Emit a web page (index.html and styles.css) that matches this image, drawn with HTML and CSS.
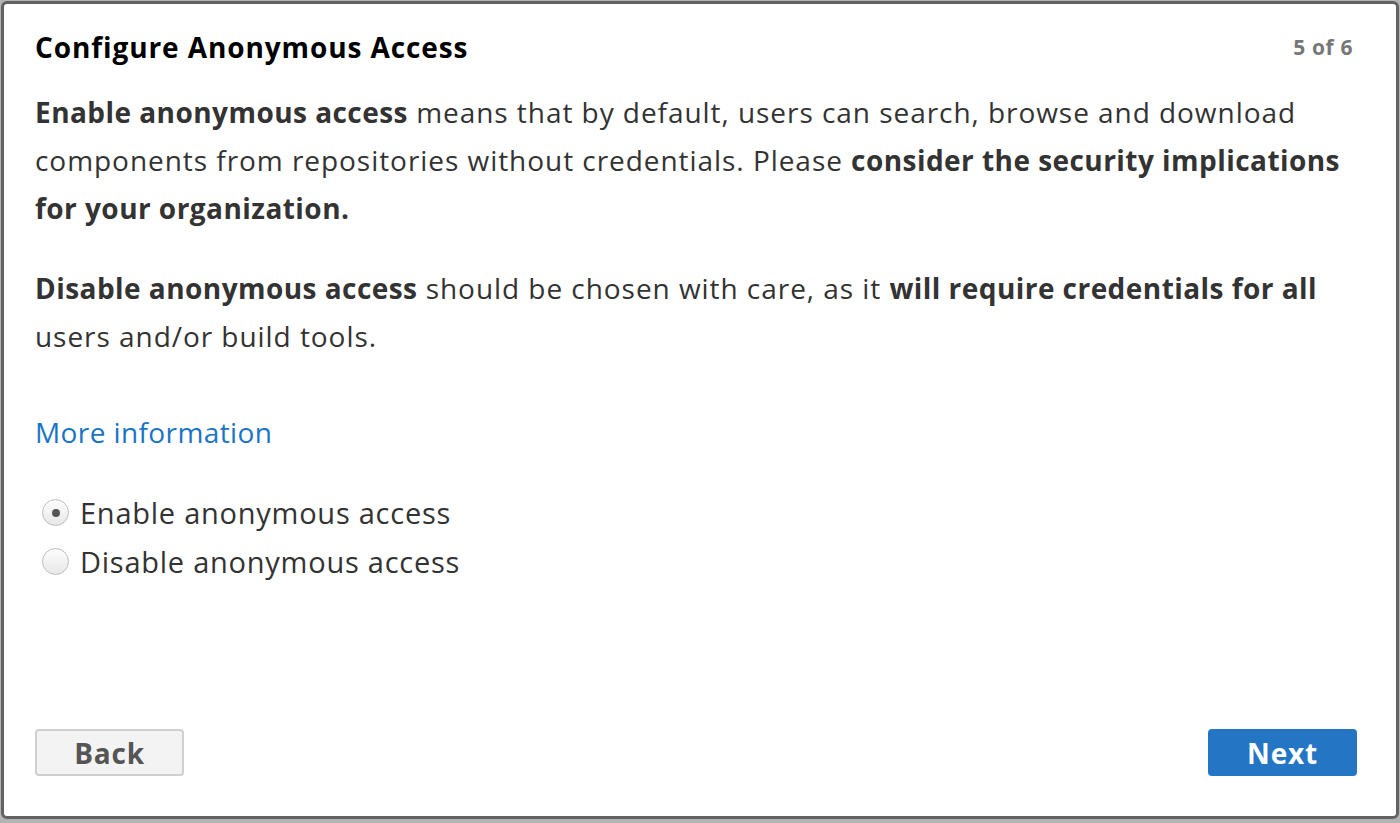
FILE: index.html
```html
<!DOCTYPE html>
<html>
<head>
<meta charset="utf-8">
<link rel="stylesheet" href="styles.css">
</head>
<body>
<div class="dialog">
  <div class="header">
    <h1 class="title">Configure Anonymous Access</h1>
    <span class="step">5 of 6</span>
  </div>
  <div class="body">
    <p class="para"><b>Enable anonymous access</b> means that by default, users can search, browse and download components from repositories without credentials. Please <b>consider the security implications for your organization.</b></p>
    <p class="para"><b>Disable anonymous access</b> should be chosen with care, as it <b>will require credentials for all</b> users and/or build tools.</p>
    <a class="link" href="#">More information</a>
    <div class="options">
      <label class="option"><span class="radio checked"></span>Enable anonymous access</label>
      <label class="option"><span class="radio"></span>Disable anonymous access</label>
    </div>
  </div>
  <div class="footer">
    <button class="btn back">Back</button>
    <button class="btn next">Next</button>
  </div>
</div>
</body>
</html>
```
FILE: styles.css
```css
html, body {
  margin: 0;
  padding: 0;
}
body {
  background: #b4b4b4;
  width: 1400px;
  height: 823px;
  padding: 1px 0 0 1px;
  box-sizing: border-box;
  font-family: "Open Sans", "Liberation Sans", sans-serif;
  color: #333;
}
.dialog {
  width: 1398px;
  height: 818px;
  box-sizing: border-box;
  border: 3px solid #626262;
  border-radius: 6px;
  background: #fff;
  display: flex;
  flex-direction: column;
  padding: 0 39px 0 31px;
}
.header {
  display: flex;
  justify-content: space-between;
  align-items: flex-start;
  padding-top: 25px;
}
.title {
  margin: 0;
  font-size: 28px;
  letter-spacing: 0.9px;
  font-weight: 700;
  color: #000;
  line-height: 36px;
}
.step {
  font-size: 21px;
  letter-spacing: 0.6px;
  font-weight: 700;
  color: #777;
  line-height: 36px;
  margin-right: 4px;
}
.body {
  flex: 1;
  padding-top: 23px;
}
.para {
  margin: 0 0 32px;
  font-size: 28px;
  letter-spacing: 0.95px;
  line-height: 48px;
}
.para b {
  font-weight: 700;
  letter-spacing: 0.45px;
}
.link {
  display: block;
  font-size: 28px;
  letter-spacing: 0.4px;
  line-height: 48px;
  color: #1a74c6;
  text-decoration: none;
  margin-top: 48px;
}
.options {
  margin-top: 32px;
  display: flex;
  flex-direction: column;
}
.option {
  display: flex;
  align-items: center;
  font-size: 29px;
  letter-spacing: 0.75px;
  line-height: 49px;
  height: 49px;
}
.radio {
  flex: none;
  width: 27px;
  height: 27px;
  box-sizing: border-box;
  border: 1px solid #bdbdbd;
  border-radius: 50%;
  background: linear-gradient(#fdfdfd, #e8e8e8);
  margin: 0 11px 0 7px;
  display: flex;
  align-items: center;
  justify-content: center;
}
.radio.checked::after {
  content: "";
  width: 8px;
  height: 8px;
  border-radius: 50%;
  background: #555;
}
.footer {
  display: flex;
  justify-content: space-between;
  padding-bottom: 40px;
}
.btn {
  width: 149px;
  height: 47px;
  border-radius: 4px;
  font-family: inherit;
  font-size: 28px;
  letter-spacing: 0.8px;
  font-weight: 700;
  cursor: pointer;
  padding: 0;
}
.back {
  background: #f3f3f3;
  border: 2px solid #cfcfcf;
  color: #555;
}
.next {
  background: #2476c5;
  border: none;
  color: #fff;
}
```
